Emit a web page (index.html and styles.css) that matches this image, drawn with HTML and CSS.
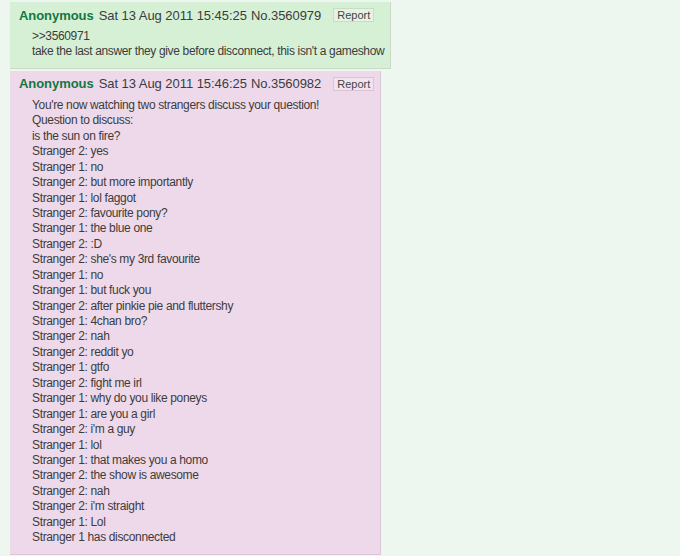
FILE: index.html
```html
<!DOCTYPE html>
<html lang="en">
<head>
    <meta charset="UTF-8">
    <title>Thread</title>
    <link rel="stylesheet" href="styles.css">
</head>
<body>
    <div class="thread">
        <div class="post reply">
            <div class="post-header">
                <span class="name">Anonymous</span>
                <span class="date">Sat 13 Aug 2011 15:45:25</span>
                <span class="num">No.3560979</span>
                <a class="report">Report</a>
            </div>
            <div class="post-body">
                &gt;&gt;3560971<br>
                take the last answer they give before disconnect, this isn't a gameshow
            </div>
        </div>

        <div class="post reply highlight">
            <div class="post-header">
                <span class="name">Anonymous</span>
                <span class="date">Sat 13 Aug 2011 15:46:25</span>
                <span class="num">No.3560982</span>
                <a class="report">Report</a>
            </div>
            <div class="post-body">
                You're now watching two strangers discuss your question!<br>
                Question to discuss:<br>
                is the sun on fire?<br>
                Stranger 2: yes<br>
                Stranger 1: no<br>
                Stranger 2: but more importantly<br>
                Stranger 1: lol faggot<br>
                Stranger 2: favourite pony?<br>
                Stranger 1: the blue one<br>
                Stranger 2: :D<br>
                Stranger 2: she's my 3rd favourite<br>
                Stranger 1: no<br>
                Stranger 1: but fuck you<br>
                Stranger 2: after pinkie pie and fluttershy<br>
                Stranger 1: 4chan bro?<br>
                Stranger 2: nah<br>
                Stranger 2: reddit yo<br>
                Stranger 1: gtfo<br>
                Stranger 2: fight me irl<br>
                Stranger 1: why do you like poneys<br>
                Stranger 1: are you a girl<br>
                Stranger 2: i'm a guy<br>
                Stranger 1: lol<br>
                Stranger 1: that makes you a homo<br>
                Stranger 2: the show is awesome<br>
                Stranger 2: nah<br>
                Stranger 2: i'm straight<br>
                Stranger 1: Lol<br>
                Stranger 1 has disconnected
            </div>
        </div>
    </div>
</body>
</html>
```

FILE: styles.css
```css
body {
    margin: 0;
    padding: 2px 10px;
    font-family: 'Liberation Sans', Arial, sans-serif;
    font-size: 12px;
    color: #3c3c3c;
    background-color: #eef7ef;
}

.thread {
    display: flex;
    flex-direction: column;
    align-items: flex-start;
    gap: 2px;
}

.post {
    padding: 3px 6px 8px 9px;
    border-right: 1px solid #c9d9c6;
    border-bottom: 1px solid #c9d9c6;
    background-color: #d6f0d6;
}

.post.highlight {
    background-color: #eed9ea;
    border-color: #dac6d6;
}

.post-header {
    display: flex;
    align-items: center;
    font-size: 13px;
    letter-spacing: -0.05px;
    height: 20px;
}

.name {
    color: #117743;
    font-weight: 700;
    margin-right: 5px;
}

.date {
    margin-right: 4px;
}

.report {
    margin-left: 12px;
    padding: 0 3px;
    font-size: 11px;
    line-height: 12px;
    letter-spacing: 0;
    border: 1px solid #c9dcc6;
    background-color: #e6f3e2;
    color: #444444;
}

.highlight .report {
    border-color: #d8c5d4;
    background-color: #f2e4ef;
}

.post-body {
    margin: 4px 0 0 13px;
    line-height: 15.43px;
    letter-spacing: -0.35px;
}
```
